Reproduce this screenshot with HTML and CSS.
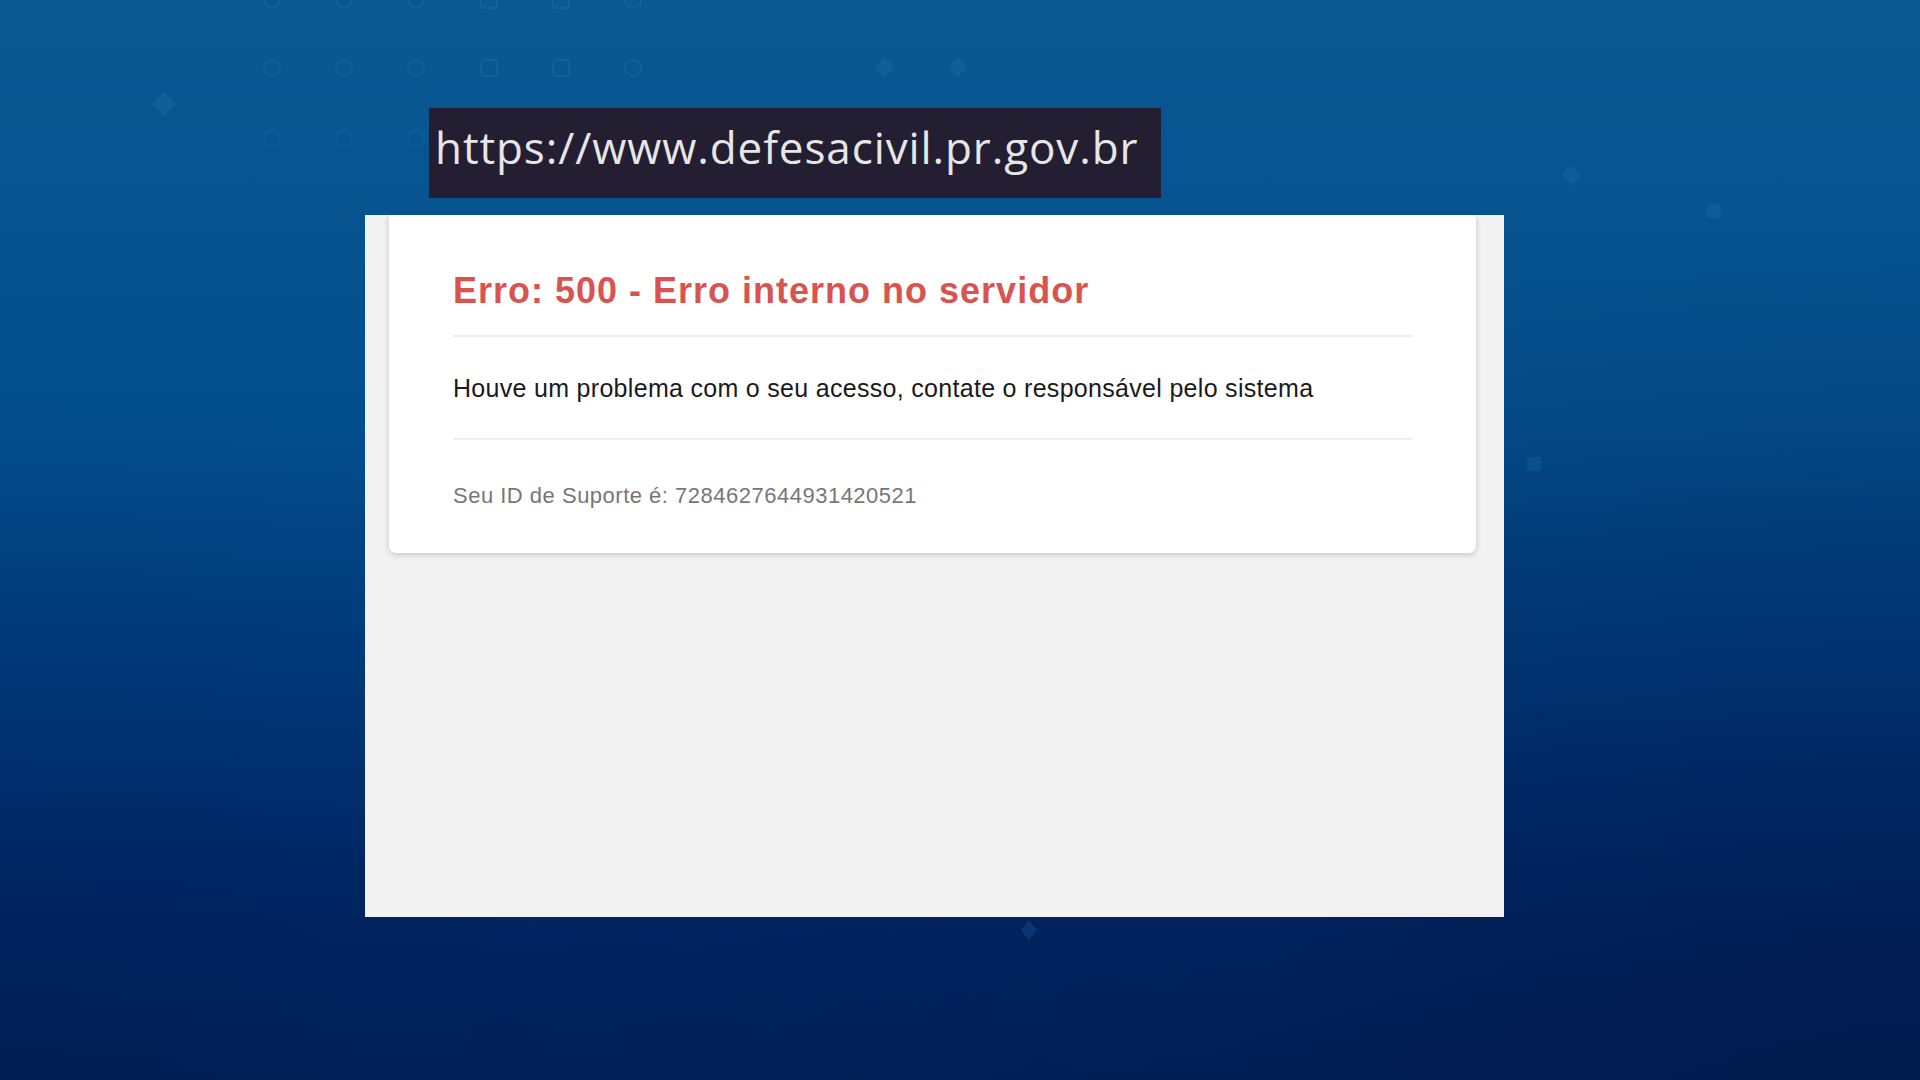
FILE: index.html
```html
<!DOCTYPE html>
<html lang="pt-BR">
<head>
  <meta charset="UTF-8">
  <meta name="viewport" content="width=device-width, initial-scale=1.0">
  <title>Erro 500 - Defesa Civil PR</title>
  <link rel="stylesheet" href="styles.css">
</head>
<body>
  <!-- faint background pattern -->
  <svg class="pattern" width="1920" height="1080" viewBox="0 0 1920 1080">
    <g fill="none" stroke="#3f86c0" stroke-width="2" opacity="0.18">
      <circle cx="272" cy="68" r="8" />
      <circle cx="344" cy="68" r="8" />
      <circle cx="416" cy="68" r="8" />
      <rect x="481" y="60" width="16" height="16" rx="3" />
      <rect x="553" y="60" width="16" height="16" rx="3" />
      <circle cx="633" cy="68" r="8" />
      <circle cx="272" cy="138" r="8" />
      <circle cx="344" cy="138" r="8" />
      <circle cx="416" cy="138" r="8" />
      <circle cx="272" cy="0" r="8" />
      <circle cx="344" cy="0" r="8" />
      <circle cx="416" cy="0" r="8" />
      <rect x="481" y="-8" width="16" height="16" rx="3" />
      <rect x="553" y="-8" width="16" height="16" rx="3" />
      <circle cx="633" cy="0" r="8" />
    </g>
    <g fill="#2f79b5" opacity="0.22">
      <path d="M164 92 L176 104 L164 116 L152 104 Z" />
      <path d="M885 57 L895 67 L885 77 L875 67 Z" />
      <path d="M958 57 L968 67 L958 77 L948 67 Z" />
      <path d="M1571 165 L1581 175 L1571 185 L1561 175 Z" />
      <circle cx="1714" cy="211" r="8" />
      <rect x="1527" y="457" width="14" height="14" rx="2" />
      <path d="M1029 920 L1037 930 L1029 940 L1021 930 Z" />
    </g>
  </svg>

  <div class="stage">
    <div class="url-bar">https://www.defesacivil.pr.gov.br</div>

    <div class="panel">
      <div class="card">
        <h3 class="card-title">Erro: 500 - Erro interno no servidor</h3>
        <hr class="rule-top">
        <p class="card-text">Houve um problema com o seu acesso, contate o responsável pelo sistema</p>
        <hr class="rule-bottom">
        <p class="support">Seu ID de Suporte é: 7284627644931420521</p>
      </div>
    </div>
  </div>
</body>
</html>
```

FILE: styles.css
```css
html, body {
  margin: 0;
  padding: 0;
  height: 100%;
}
body {
  position: relative;
  overflow: hidden;
  font-family: "Liberation Sans", Arial, sans-serif;
  background:
    radial-gradient(ellipse at 100% 100%, rgba(0, 18, 60, 0.55) 0%, rgba(0, 18, 60, 0) 55%),
    radial-gradient(ellipse at 0% 100%, rgba(0, 20, 60, 0.35) 0%, rgba(0, 20, 60, 0) 45%),
    linear-gradient(to bottom, #0a5992 0%, #034e8d 40%, #003a7e 65%, #00286b 85%, #00235f 100%);
}
.pattern {
  position: absolute;
  top: 0;
  left: 0;
  pointer-events: none;
}
.stage {
  position: relative;
  padding-top: 108px;
  padding-left: 365px;
}
.url-bar {
  display: inline-block;
  margin-left: 64px;
  width: 732px;
  height: 90px;
  box-sizing: border-box;
  padding: 9px 0 0 6px;
  background: #231e32;
  color: #e6e6e6;
  font-family: "Open Sans", "Noto Sans", sans-serif;
  font-size: 44px;
  line-height: 60px;
  letter-spacing: 0.9px;
  white-space: nowrap;
}
.panel {
  margin-top: 17px;
  width: 1139px;
  height: 702px;
  box-sizing: border-box;
  padding: 0 28px 0 24px;
  background: #f2f2f2;
}
.card {
  background: #fff;
  border-radius: 0 0 7px 7px;
  box-shadow: 0 2px 6px rgba(0, 0, 0, 0.18);
  padding: 55px 64px 44px 64px;
}
.card-title {
  margin: 0;
  color: #d9534f;
  font-size: 36px;
  font-weight: bold;
  line-height: 42px;
  letter-spacing: 1px;
}
hr {
  border: none;
  border-top: 2px solid #eeeeee;
  margin: 0;
}
.rule-top {
  margin: 23px 0 30px;
}
.rule-bottom {
  margin: 29px 0 26px;
}
.card-text {
  margin: 0;
  color: #1a1a1a;
  font-size: 25px;
  line-height: 30px;
  letter-spacing: 0.3px;
  padding: 6px 0;
}
.support {
  margin: 0;
  padding-top: 17px;
  color: #777;
  font-size: 22px;
  line-height: 26px;
  letter-spacing: 0.5px;
}
```
